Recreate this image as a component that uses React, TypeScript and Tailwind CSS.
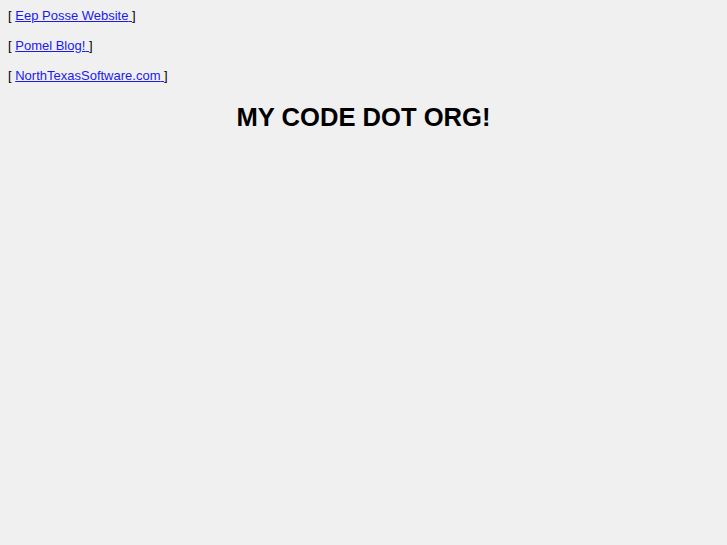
export default function App() {
  const links = ["Eep Posse Website", "Pomel Blog!", "NorthTexasSoftware.com"];
  return (
    <div className="min-h-[545px] bg-[#f0f0f0] px-2 pt-2 text-[13px] leading-[15px] text-black font-['Liberation_Sans',Arial,sans-serif]">
      <div className="flex flex-col gap-[15px]">
        {links.map((l) => (
          <div key={l}>
            [ <a href="#" className="text-[#1a1aee] underline">{l} </a>]
          </div>
        ))}
      </div>
      <h1 className="mt-[20px] text-center text-[25.6px] leading-[29px] font-bold">MY CODE DOT ORG!</h1>
    </div>
  );
}
